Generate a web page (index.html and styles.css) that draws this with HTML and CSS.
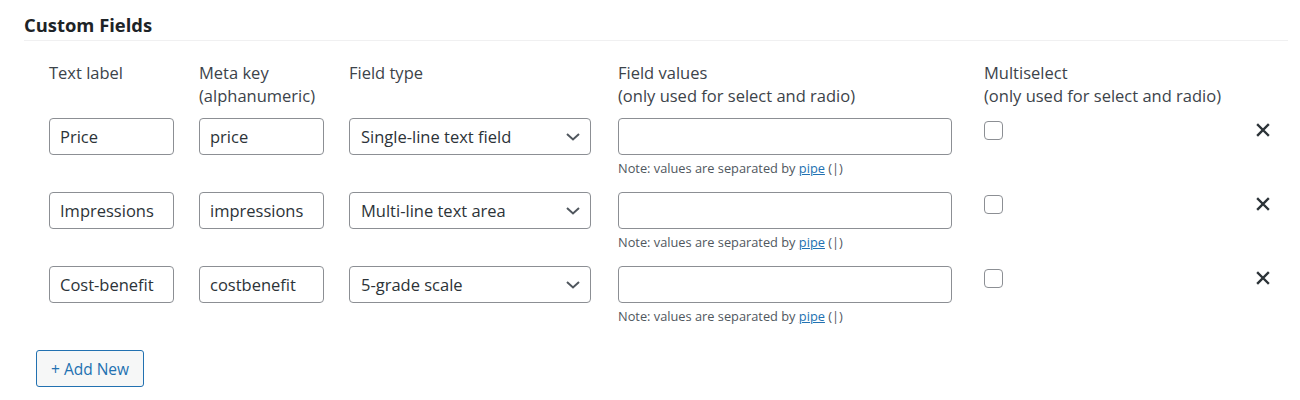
FILE: index.html
```html
<!DOCTYPE html>
<html lang="en">
<head>
    <meta charset="UTF-8">
    <meta name="viewport" content="width=device-width, initial-scale=1.0">
    <title>Custom Fields</title>
    <link rel="stylesheet" href="styles.css">
</head>
<body>
    <div class="wrap">
        <h2 class="section-title">Custom Fields</h2>
        <table class="fields">
            <colgroup>
                <col style="width: 150px">
                <col style="width: 150px">
                <col style="width: 269px">
                <col style="width: 366px">
                <col>
                <col style="width: 50px">
            </colgroup>
            <thead>
                <tr>
                    <th>Text label</th>
                    <th>Meta key<br>(alphanumeric)</th>
                    <th>Field type</th>
                    <th>Field values<br>(only used for select and radio)</th>
                    <th>Multiselect<br>(only used for select and radio)</th>
                    <th></th>
                </tr>
            </thead>
            <tbody>
                <tr>
                    <td><input type="text" class="small-text" value="Price"></td>
                    <td><input type="text" class="small-text" value="price"></td>
                    <td>
                        <select>
                            <option selected>Single-line text field</option>
                            <option>Multi-line text area</option>
                            <option>5-grade scale</option>
                        </select>
                    </td>
                    <td>
                        <input type="text" class="wide-text" value="">
                        <p class="note">Note: values are separated by <a href="#">pipe</a> (|)</p>
                    </td>
                    <td><input type="checkbox" class="check"></td>
                    <td class="remove-cell"><a href="#" class="remove" title="Remove">
                        <svg width="14" height="14" viewBox="0 0 14 14"><path d="M2 2 L12 12 M12 2 L2 12" stroke="#2c3338" stroke-width="2.4" stroke-linecap="square"/></svg>
                    </a></td>
                </tr>
                <tr>
                    <td><input type="text" class="small-text" value="Impressions"></td>
                    <td><input type="text" class="small-text" value="impressions"></td>
                    <td>
                        <select>
                            <option>Single-line text field</option>
                            <option selected>Multi-line text area</option>
                            <option>5-grade scale</option>
                        </select>
                    </td>
                    <td>
                        <input type="text" class="wide-text" value="">
                        <p class="note">Note: values are separated by <a href="#">pipe</a> (|)</p>
                    </td>
                    <td><input type="checkbox" class="check"></td>
                    <td class="remove-cell"><a href="#" class="remove" title="Remove">
                        <svg width="14" height="14" viewBox="0 0 14 14"><path d="M2 2 L12 12 M12 2 L2 12" stroke="#2c3338" stroke-width="2.4" stroke-linecap="square"/></svg>
                    </a></td>
                </tr>
                <tr>
                    <td><input type="text" class="small-text" value="Cost-benefit"></td>
                    <td><input type="text" class="small-text" value="costbenefit"></td>
                    <td>
                        <select>
                            <option>Single-line text field</option>
                            <option>Multi-line text area</option>
                            <option selected>5-grade scale</option>
                        </select>
                    </td>
                    <td>
                        <input type="text" class="wide-text" value="">
                        <p class="note">Note: values are separated by <a href="#">pipe</a> (|)</p>
                    </td>
                    <td><input type="checkbox" class="check"></td>
                    <td class="remove-cell"><a href="#" class="remove" title="Remove">
                        <svg width="14" height="14" viewBox="0 0 14 14"><path d="M2 2 L12 12 M12 2 L2 12" stroke="#2c3338" stroke-width="2.4" stroke-linecap="square"/></svg>
                    </a></td>
                </tr>
            </tbody>
        </table>
        <p class="actions"><button class="button">+ Add New</button></p>
    </div>
</body>
</html>
```

FILE: styles.css
```css
body { margin: 0; background: #fff; color: #3c434a; font-family: "Open Sans", "Noto Sans", sans-serif; font-size: 16.5px; }
.wrap { padding: 12px 12px 0 24px; }
.section-title { margin: 0; padding-bottom: 2px; font-size: 18.4px; line-height: 26px; font-weight: 700; color: #1d2327; border-bottom: 1px solid #f0f0f1; }

.fields { margin: 20px 0 0 12px; width: calc(100% - 12px); border-collapse: collapse; table-layout: fixed; }
.fields th { padding: 0 13px; text-align: left; vertical-align: top; font-weight: 400; line-height: 23px; height: 46px; white-space: nowrap; }
.fields td { padding: 11px 13px 4px; vertical-align: top; height: 59px; }

input[type="text"], select { box-sizing: border-box; height: 37px; border: 1px solid #8c8f94; border-radius: 4px; background: #fff; color: #2c3338; font-family: inherit; font-size: 16.5px; padding: 0 10px; margin: 0; }
.small-text { width: 125px; }
.wide-text { width: 334px; }
select { width: 242px; padding: 0 30px 0 11px; appearance: none; -webkit-appearance: none;
         background: #fff url('data:image/svg+xml;utf8,<svg xmlns="http://www.w3.org/2000/svg" width="16" height="10" viewBox="0 0 16 10"><path d="M2 2 L8 7.5 L14 2" fill="none" stroke="%2350575e" stroke-width="2"/></svg>') no-repeat right 9px top 50%; }

.note { margin: 4px 0 0; font-size: 12.8px; line-height: 18px; color: #50575e; }
.note a { color: #2271b1; }

.check { appearance: none; -webkit-appearance: none; box-sizing: border-box; width: 19px; height: 19px; margin: 3px 0 0; border: 1px solid #8c8f94; border-radius: 4px; background: #fff; }
.remove-cell { text-align: center; }
.remove { display: inline-block; margin-top: 5px; line-height: 0; }

.actions { margin: 21px 0 0 12px; }
.button { height: 37px; padding: 0 14px; border: 1px solid #2271b1; border-radius: 3px; background: #f6f7f7; color: #2271b1; font-family: inherit; font-size: 15.5px; cursor: pointer; }
```
